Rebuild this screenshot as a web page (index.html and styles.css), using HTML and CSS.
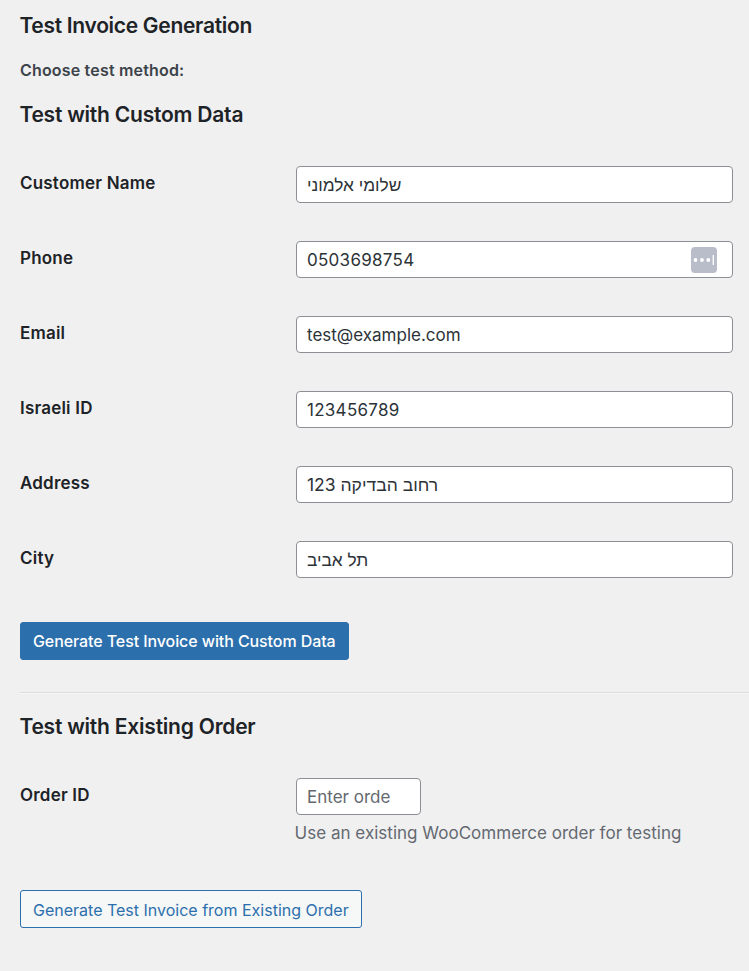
FILE: index.html
```
<!DOCTYPE html>
<html lang="en">
<head>
    <meta charset="UTF-8">
    <meta name="viewport" content="width=device-width, initial-scale=1.0">
    <title>Test Invoice Generation</title>
    <link rel="stylesheet" href="styles.css">
</head>
<body>
    <div class="wrap">
        <h2 class="page-title">Test Invoice Generation</h2>
        <p class="intro">Choose test method:</p>

        <form class="custom-form">
            <h3 class="section-title title-custom">Test with Custom Data</h3>
            <div class="form-row">
                <label for="customer_name">Customer Name</label>
                <input type="text" id="customer_name" class="hebrew" value="שלומי אלמוני">
            </div>
            <div class="form-row">
                <label for="phone">Phone</label>
                <div class="input-wrap">
                    <input type="text" id="phone" class="digits" value="0503698754">
                    <svg class="autofill-icon" width="26" height="26" viewBox="0 0 26 26">
                        <rect width="26" height="26" rx="4" fill="#b9bdc9"/>
                        <circle cx="4.5" cy="13" r="1.9" fill="#fff"/>
                        <circle cx="11" cy="13" r="1.9" fill="#fff"/>
                        <circle cx="17.3" cy="13" r="1.9" fill="#fff"/>
                        <rect x="21.6" y="8" width="1.3" height="10" fill="#fff"/>
                    </svg>
                </div>
            </div>
            <div class="form-row">
                <label for="email">Email</label>
                <input type="text" id="email" value="test@example.com">
            </div>
            <div class="form-row">
                <label for="israeli_id">Israeli ID</label>
                <input type="text" id="israeli_id" class="digits" value="123456789">
            </div>
            <div class="form-row">
                <label for="address">Address</label>
                <input type="text" id="address" class="hebrew address" value="רחוב הבדיקה 123" dir="rtl">
            </div>
            <div class="form-row">
                <label for="city">City</label>
                <input type="text" id="city" class="hebrew" value="תל אביב">
            </div>
            <button type="button" class="button button-primary">Generate Test Invoice with Custom Data</button>
        </form>

        <hr>

        <form class="order-form">
            <h3 class="section-title title-order">Test with Existing Order</h3>
            <div class="form-row order-row">
                <label for="order_id">Order ID</label>
                <div>
                    <input type="text" id="order_id" class="small-text" placeholder="Enter order ID">
                    <p class="description">Use an existing WooCommerce order for testing</p>
                </div>
            </div>
            <button type="button" class="button button-secondary">Generate Test Invoice from Existing Order</button>
        </form>
    </div>
</body>
</html>
```

FILE: styles.css
```
* {
    box-sizing: border-box;
}
body {
    margin: 0;
    background-color: #f0f0f0;
    color: #1d2327;
    font-family: Inter, "Liberation Sans", sans-serif;
    font-size: 16.5px;
    overflow: hidden;
}
.wrap {
    padding: 10px 0 0 20px;
}
.page-title, .section-title {
    margin: 0;
    font-size: 21px;
    line-height: 32px;
    font-weight: 600;
    letter-spacing: -0.3px;
    text-indent: -0.6px;
}
.title-custom, .title-order {
    letter-spacing: -0.22px;
}
.intro {
    margin: 16px 0 17px;
    color: #3c434a;
    font-size: 16px;
    line-height: 24px;
    font-weight: 600;
    letter-spacing: 0.18px;
}
.form-row {
    display: grid;
    grid-template-columns: 276px 437px;
    height: 75px;
    align-items: start;
}
.section-title + .form-row {
    margin-top: 35px;
}
label {
    padding-top: 5px;
    font-size: 17px;
    line-height: 24px;
    font-weight: 600;
    letter-spacing: 0.2px;
}
input {
    display: block;
    width: 100%;
    height: 37px;
    padding: 0 10px;
    border: 1px solid #8c8f94;
    border-radius: 4px;
    background-color: #fff;
    color: #2c3338;
    font-family: Inter, "Liberation Sans", sans-serif;
    font-size: 17px;
}
input::placeholder {
    color: #646970;
    opacity: 1;
}
.digits {
    letter-spacing: 0.28px;
}
.hebrew {
    font-size: 17.3px;
}
.address {
    font-size: 17.5px;
    text-align: left;
}
.input-wrap {
    position: relative;
}
.autofill-icon {
    position: absolute;
    top: 6px;
    right: 16px;
}
.button {
    display: block;
    height: 38px;
    padding: 0 12px;
    border: 1px solid #2c6fad;
    border-radius: 3px;
    background-color: #f6f7f7;
    color: #2c6fad;
    font-family: Inter, "Liberation Sans", sans-serif;
    font-size: 16px;
    white-space: nowrap;
}
.button-primary {
    margin-top: 6px;
    background-color: #2c6fad;
    color: #fff;
    font-weight: 500;
    letter-spacing: -0.09px;
}
.button-secondary {
    padding-top: 2px;
}
hr {
    margin: 32px 0 17px;
    border: 0;
    border-top: 1px solid #dcdcde;
    border-bottom: 1px solid #f6f7f7;
}
.small-text {
    width: 125px;
    padding-right: 29px;
}
.description {
    margin: 6px 0 0 -1.5px;
    color: #646970;
    font-size: 17px;
    line-height: 24px;
    letter-spacing: 0.02px;
}
.order-row {
    height: 112px;
}
```
